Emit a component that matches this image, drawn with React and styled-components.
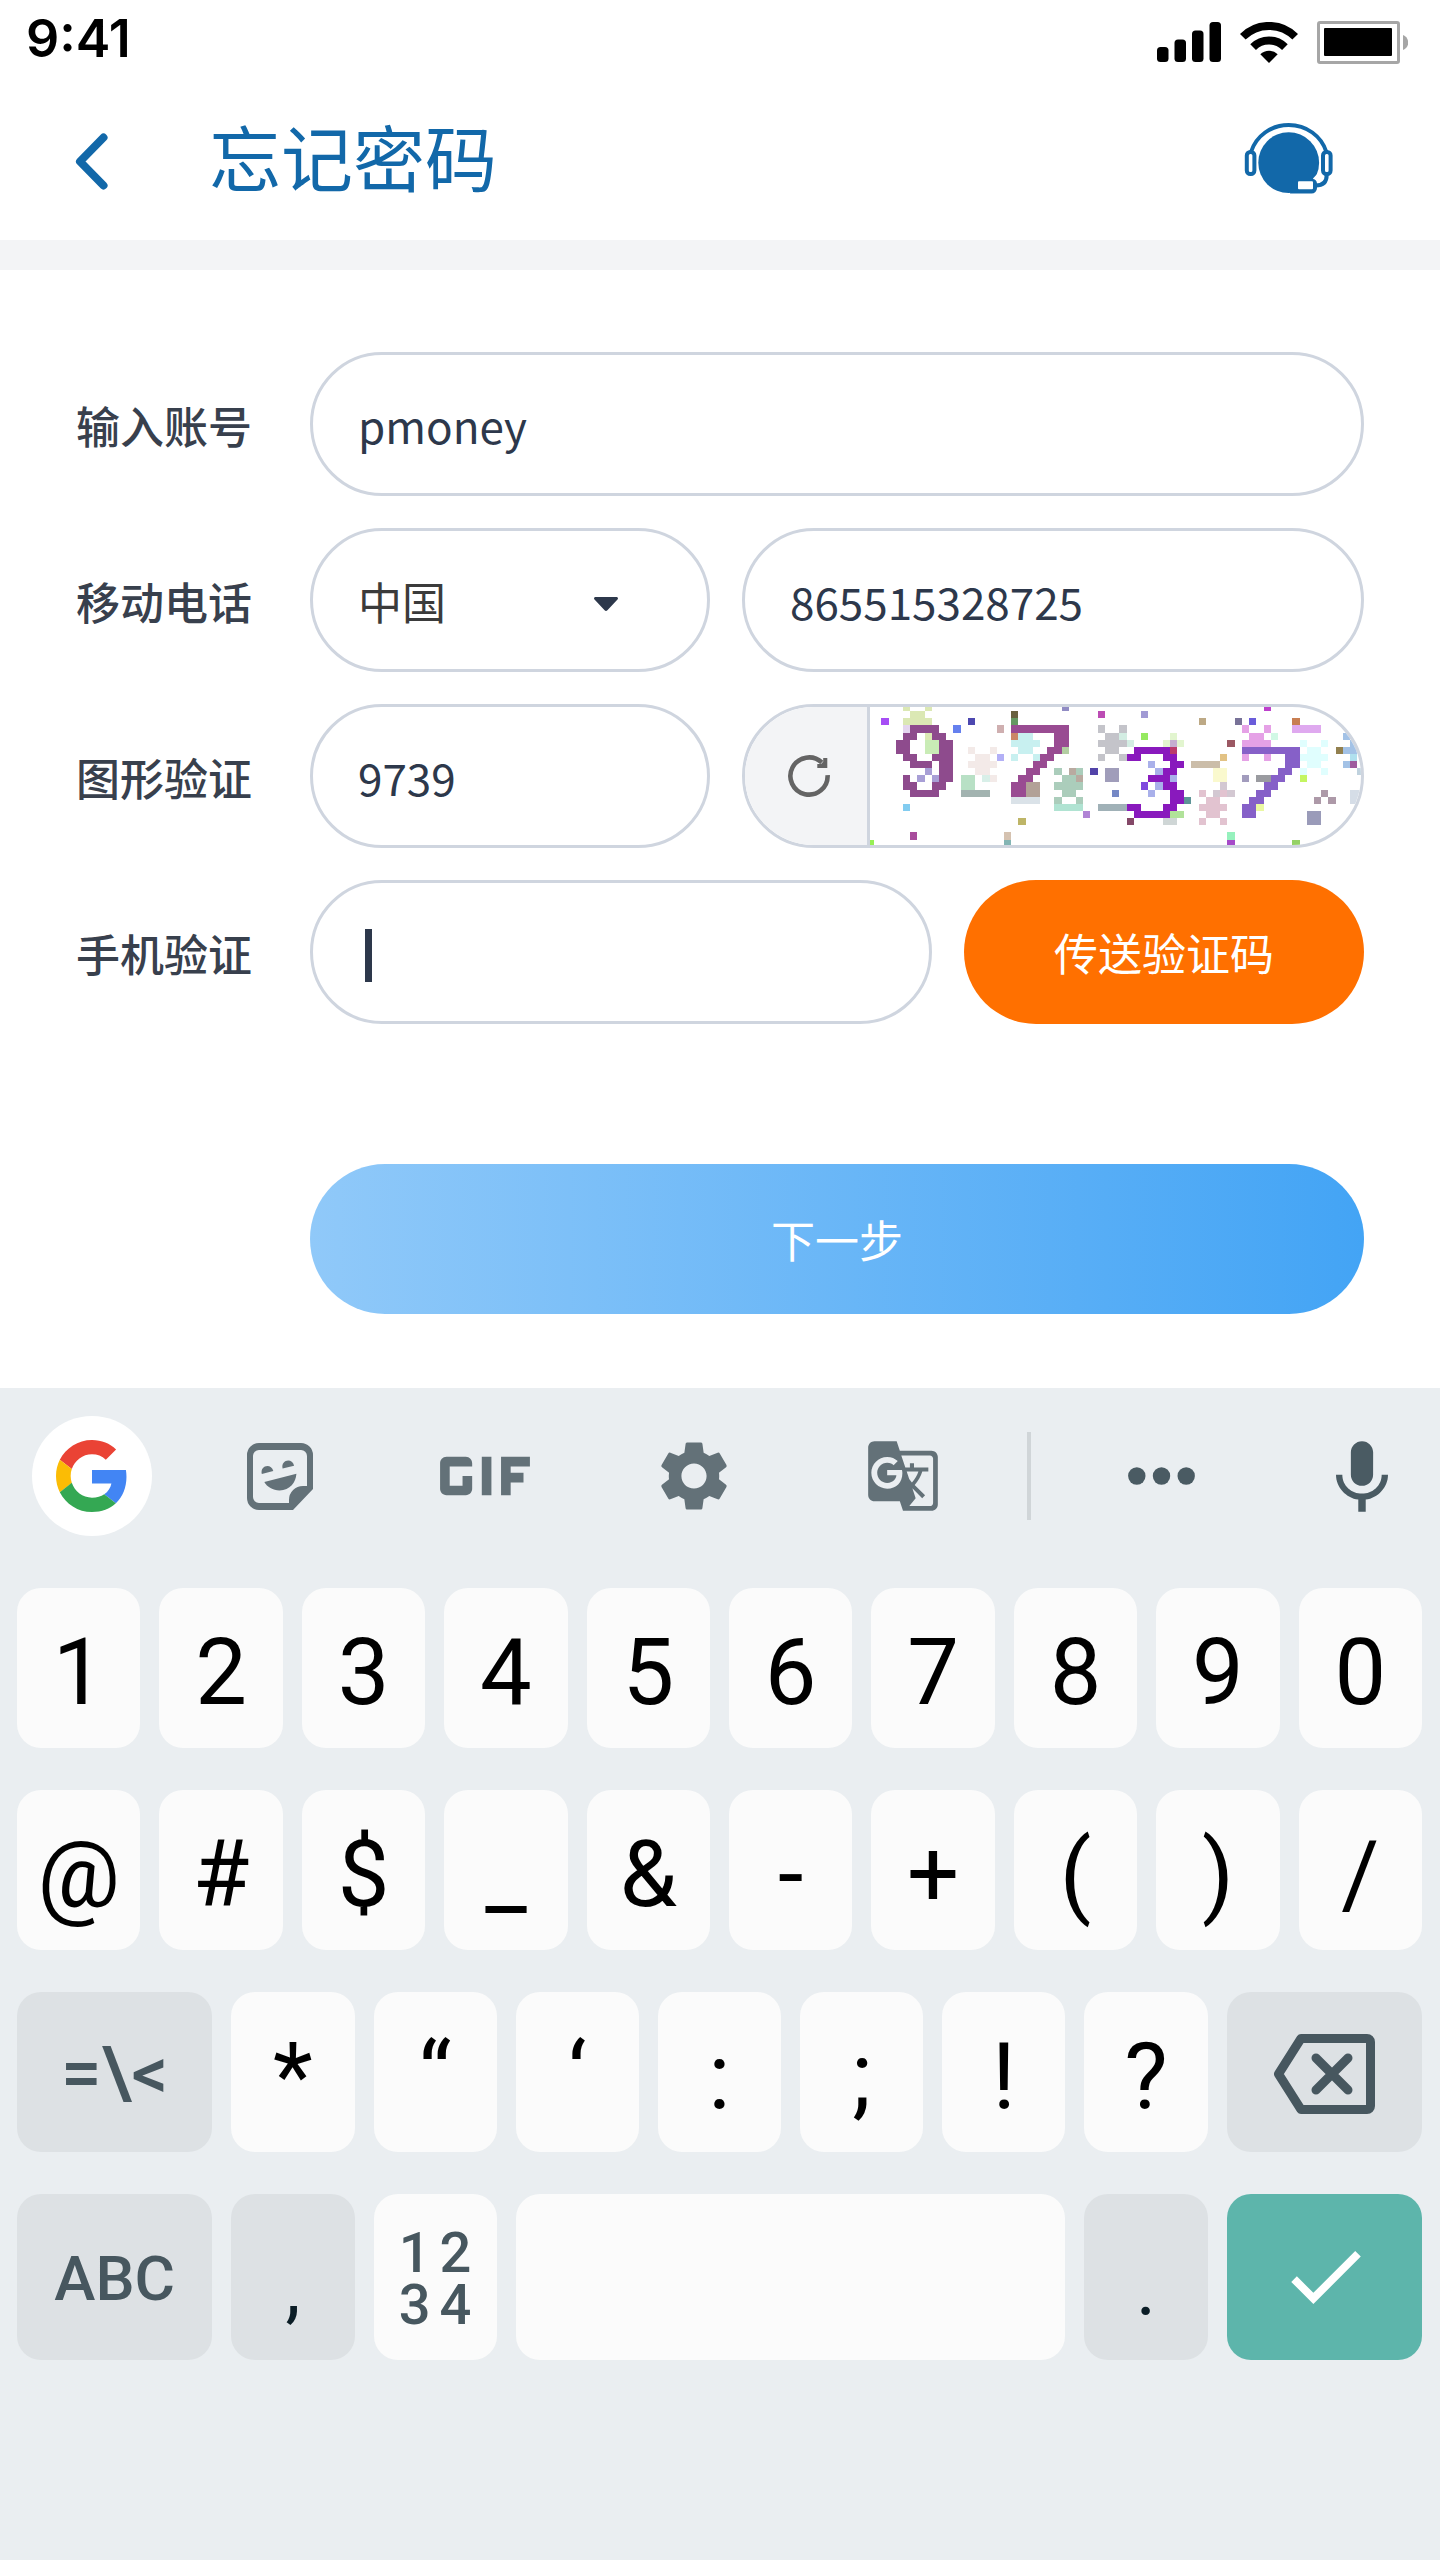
import React from "react";
import styled, { createGlobalStyle } from "styled-components";
import { MdGif, MdSettings, MdGTranslate } from "react-icons/md";

const color = {
  brand: "#1268a9",
  ink: "#2d384b",
  label: "#38404d",
  line: "#cfd5df",
  band: "#f3f4f6",
  orange: "#ff7000",
  board: "#eaeef1",
  key: "#fbfbfb",
  keyMuted: "#dde1e4",
  keyInk: "#47575f",
  tool: "#637178",
  toolDark: "#4a5b63",
  enter: "#5db5ab",
};

const GlobalStyle = createGlobalStyle`
  *, *::before, *::after { box-sizing: border-box; }
  body {
    margin: 0;
    background: #fff;
    color: ${color.ink};
    font-family: "Noto Sans CJK SC", sans-serif;
  }
  button, input, select { font: inherit; color: inherit; margin: 0; }
  button { border: 0; padding: 0; background: none; cursor: pointer; }
  svg { display: block; }
`;

const Screen = styled.div`
  display: flex;
  flex-direction: column;
  min-height: 100vh;
`;

/* ---------- status bar and header ---------- */

const StatusBar = styled.div`
  display: flex;
  align-items: center;
  justify-content: space-between;
  height: 84px;
  padding: 0 32px 0 26px;
  color: #000;
`;

const Clock = styled.time`
  padding-bottom: 6px;
  font: 600 52px/60px Inter, sans-serif;
`;

const StatusIcons = styled.div`
  display: flex;
  align-items: center;
  gap: 19px;
`;

const Header = styled.header`
  display: grid;
  grid-template-columns: 134px 1fr auto;
  align-items: center;
  height: 186px;
  padding: 0 107px 8px 75px;
  border-bottom: 30px solid ${color.band};
  color: ${color.brand};
`;

const BackButton = styled.button`
  padding-top: 6px;
`;

const Title = styled.h1`
  margin: 0;
  padding-bottom: 6px;
  font-size: 72px;
  line-height: 104px;
  font-weight: 400;
`;

/* ---------- form ---------- */

const Form = styled.form`
  display: flex;
  flex-direction: column;
  gap: 32px;
  padding: 82px 76px 74px;
  font-size: 44px;
  line-height: 64px;
`;

const Row = styled.div`
  display: grid;
  grid-template-columns: 234px 1fr;
  align-items: center;
`;

const Label = styled.label`
  padding-top: 2px;
  color: ${color.label};
  font-weight: 500;
`;

const Controls = styled.div`
  display: grid;
  grid-template-columns: ${(p) => p.$columns || "1fr"};
  gap: 32px;
`;

const Field = styled.div`
  position: relative;
  display: flex;
  height: 144px;
  border: 3px solid ${color.line};
  border-radius: 72px;
  overflow: hidden;
`;

const Input = styled.input`
  flex: 1;
  min-width: 0;
  padding: 2px 45px 0;
  border: 0;
  outline: 0;
  background: transparent;
  caret-color: transparent;
`;

const Select = styled.select`
  flex: 1;
  padding: 2px 45px 0;
  border: 0;
  outline: 0;
  appearance: none;
  background: transparent;
  color: #3b3b3b;
`;

const SelectArrow = styled.svg`
  position: absolute;
  top: 66px;
  right: 89px;
  pointer-events: none;
`;

const TextCursor = styled.span`
  position: absolute;
  top: 46px;
  left: 52px;
  width: 7px;
  height: 53px;
  background: ${color.ink};
`;

const RefreshButton = styled.button`
  display: flex;
  align-items: center;
  justify-content: center;
  width: 125px;
  padding-left: 6px;
  border-right: 3px solid ${color.line};
  background: ${color.band};
`;

const CaptchaImage = styled.svg`
  flex: 1;
  min-width: 0;
  height: 100%;
`;

const SendButton = styled.button`
  height: 144px;
  border-radius: 72px;
  background: ${color.orange};
  color: #fff;
`;

const NextButton = styled.button`
  height: 150px;
  margin: 108px 0 0 234px;
  border-radius: 75px;
  background: linear-gradient(90deg, #90c9f9, #43a4f5);
  color: #fff;
`;

/* ---------- keyboard ---------- */

const Keyboard = styled.section`
  flex: 1;
  padding-bottom: 200px;
  background: ${color.board};
`;

const Toolbar = styled.div`
  display: grid;
  grid-template-columns: 184fr 192fr 218fr 200fr 218fr 34fr 230fr 112fr;
  align-items: center;
  justify-items: center;
  height: 176px;
  margin-bottom: 24px;
  padding-right: 52px;

  > :last-child { justify-self: end; }
`;

const Tool = styled.button`
  color: ${(p) => (p.$dark ? color.toolDark : color.tool)};
`;

const GoogleTool = styled.button`
  display: flex;
  align-items: center;
  justify-content: center;
  width: 120px;
  height: 120px;
  border-radius: 50%;
  background: #fff;
`;

const ToolDivider = styled.span`
  width: 4px;
  height: 88px;
  background: #d0d5d8;
`;

const Keys = styled.div`
  display: flex;
  flex-direction: column;
  gap: 42px;
  padding: 0 18px 0 17px;
`;

const KeyRow = styled.div`
  display: grid;
  grid-template-columns: ${(p) => (p.$wideEnds ? "195fr repeat(7, 123fr) 195fr" : "repeat(10, 1fr)")};
  grid-auto-rows: ${(p) => (p.$tall ? 166 : 160)}px;
  gap: 19px;
`;

const Key = styled.button`
  display: flex;
  align-items: center;
  justify-content: center;
  min-width: 0;
  padding-top: 10px;
  border-radius: 24px;
  background: ${color.key};
  color: #000;
  font: 400 92px/108px Roboto, sans-serif;
`;

const ModeKey = styled(Key)`
  padding-top: 4px;
  background: ${color.keyMuted};
  color: ${color.keyInk};
  font-size: ${(p) => (p.$symbols ? 72 : 62)}px;
  font-weight: 500;
`;

const PunctuationKey = styled(Key)`
  padding-top: 22px;
  background: ${color.keyMuted};
  color: #0b1d26;
  font-size: 76px;
`;

const NumpadKey = styled(Key)`
  display: grid;
  grid-template-columns: auto auto;
  align-content: center;
  column-gap: 9px;
  padding-top: 4px;
  color: ${color.keyInk};
  font-size: 56px;
  line-height: 52px;
  font-weight: 500;
`;

const SpaceKey = styled(Key)`
  grid-column: span 4;
`;

const EnterKey = styled(Key)`
  padding: 0 0 0 4px;
  background: ${color.enter};
  color: #fff;
`;

/* ---------- icons ---------- */

const SignalIcon = () => (
  <svg width="64" height="40" viewBox="0 0 64 40" aria-hidden="true">
    <rect x="0" y="25" width="11.5" height="15" rx="3.5" />
    <rect x="17.5" y="17.5" width="11.5" height="22.5" rx="3.5" />
    <rect x="35" y="8.5" width="11.5" height="31.5" rx="3.5" />
    <rect x="52.5" y="0" width="11.5" height="40" rx="3.5" />
  </svg>
);

const WifiIcon = () => (
  <svg width="58" height="41" viewBox="0 0 58 41" aria-hidden="true">
    <g fill="none" stroke="#000" strokeWidth="8">
      <path d="M2.8 14.8a37 37 0 0 1 52.4 0" />
      <path d="M13.1 25.1a22.5 22.5 0 0 1 31.8 0" />
    </g>
    <path d="M29 41 20.3 32.3a12.3 12.3 0 0 1 17.4 0z" />
  </svg>
);

const BatteryIcon = () => (
  <svg width="91" height="43" viewBox="0 0 91 43" aria-hidden="true">
    <rect x="1.5" y="1.5" width="80" height="40" rx="1.5" fill="none" stroke="#a6a6a6" strokeWidth="3" />
    <rect x="7" y="7" width="68" height="28" rx="1" />
    <path d="M86 14c7 3 7 12 0 15z" fill="#a6a6a6" />
  </svg>
);

const BackIcon = () => (
  <svg width="33" height="57" viewBox="0 0 33 57" aria-hidden="true">
    <path d="M28.5 4.5 5 28.5l23.5 24" fill="none" stroke="currentColor" strokeWidth="8" strokeLinecap="round" strokeLinejoin="round" />
  </svg>
);

const HeadsetIcon = () => (
  <svg width="89" height="72" viewBox="0 0 89 72" aria-hidden="true">
    <circle cx="44.7" cy="40.7" r="30.4" fill="currentColor" />
    <path d="M69 56.5 75 50v12l-3 1z" fill="#fff" />
    <g fill="none" stroke="currentColor" strokeWidth="4">
      <path d="M7 30C12 14 27 3 44.7 3S77.4 14 82.4 30" />
      <rect x="2.8" y="30" width="7.6" height="22" rx="3.5" fill="#fff" />
      <rect x="79" y="30" width="7.6" height="22" rx="3.5" fill="#fff" />
      <path d="M82.7 53c0 7-4 10.5-11 10.5" />
    </g>
    <path d="M49 57h19.5a4.5 4.5 0 0 1 4.5 4.5V66a5.5 5.5 0 0 1-5.5 5.5H46z" fill="currentColor" />
    <rect x="54" y="59.3" width="15" height="8" rx="1" fill="#fff" />
  </svg>
);

const RefreshIcon = () => (
  <svg width="44" height="44" viewBox="0 0 44 44" aria-hidden="true">
    <path d="M40.6 21.2A18.6 18.6 0 1 1 34.8 8.5" fill="none" stroke="#646464" strokeWidth="4.6" />
    <path d="M40.3 4v10H30.3V10H34l2.200-2.200V4z" fill="#646464" />
  </svg>
);

const GoogleIcon = () => (
  <svg width="72" height="72" viewBox="0 0 48 48" aria-hidden="true">
    <path fill="#ea4335" d="M24 9.5c3.54 0 6.71 1.22 9.21 3.6l6.85-6.85C35.9 2.38 30.47 0 24 0 14.62 0 6.51 5.38 2.56 13.22l7.98 6.19C12.43 13.72 17.74 9.5 24 9.5z" />
    <path fill="#4285f4" d="M46.98 24.55c0-1.57-.15-3.09-.38-4.55H24v9.02h12.94c-.58 2.96-2.26 5.48-4.78 7.18l7.73 6c4.51-4.18 7.09-10.36 7.09-17.65z" />
    <path fill="#fbbc05" d="M10.53 28.59c-.48-1.45-.76-2.99-.76-4.59s.27-3.14.76-4.59l-7.98-6.19C.92 16.46 0 20.12 0 24c0 3.88.92 7.54 2.56 10.78l7.97-6.19z" />
    <path fill="#34a853" d="M24 48c6.48 0 11.93-2.13 15.89-5.81l-7.73-6c-2.15 1.45-4.92 2.3-8.16 2.3-6.26 0-11.57-4.22-13.47-9.91l-7.98 6.19C6.51 42.62 14.62 48 24 48z" />
  </svg>
);

const StickerIcon = () => (
  <svg width="66" height="67" viewBox="0 0 66 67" fill="currentColor" aria-hidden="true">
    <path
      fillRule="evenodd"
      d="M12 0h42a12 12 0 0 1 12 12v34L46 67H12A12 12 0 0 1 0 55V12A12 12 0 0 1 12 0zM12 7a6 6 0 0 0-6 6v41a6 6 0 0 0 6 6h30v-3a14 14 0 0 1 14-14h4V13a6 6 0 0 0-6-6z"
    />
    <path d="M14.8 31c-2.200-8.400 9.300-11.700 11.500-2.900z" />
    <path d="M35.6 25.6c-2.200-8.400 9.300-11.700 11.500-2.900z" />
    <path d="M17.3 39 49.4 30.7C49 39 43 47.4 32.5 47.4 26 47.4 20 44 17.3 39z" />
  </svg>
);

const DotsIcon = () => (
  <svg width="67" height="18" viewBox="0 0 67 18" fill="currentColor" aria-hidden="true">
    <circle cx="8.8" cy="9" r="8.7" />
    <circle cx="33.5" cy="9" r="8.7" />
    <circle cx="58.2" cy="9" r="8.7" />
  </svg>
);

const MicIcon = () => (
  <svg width="52" height="71" viewBox="5 2 14 19" fill="currentColor" aria-hidden="true">
    <path d="M12 14c1.66 0 2.99-1.34 2.99-3L15 5c0-1.66-1.34-3-3-3S9 3.34 9 5v6c0 1.66 1.34 3 3 3zm5.3-3c0 3-2.54 5.1-5.3 5.1S6.7 14 6.7 11H5c0 3.41 2.72 6.23 6 6.72V21h2v-3.28c3.28-.48 6-3.3 6-6.72h-1.7z" />
  </svg>
);

const BackspaceIcon = () => (
  <svg width="102" height="80" viewBox="0 0 102 80" fill="none" stroke="currentColor" strokeWidth="9" aria-hidden="true">
    <path d="M28 4.5h66a3.5 3.5 0 0 1 3.5 3.5v64a3.5 3.5 0 0 1-3.5 3.5H28L5.5 40z" strokeLinejoin="round" />
    <path d="m43 24 32 32M75 24 43 56" strokeLinecap="round" />
  </svg>
);

const CheckIcon = () => (
  <svg width="70" height="53" viewBox="3.4 5.59 17.6 13.41" fill="currentColor" aria-hidden="true">
    <path d="M9 16.17 4.83 12l-1.42 1.41L9 19 21 7l-1.41-1.41z" />
  </svg>
);

/* Captcha bitmap: each colour is followed by its blocks as [column, row, width, height]. */
const captcha = [
  ["#dbe8b4", [5, 0, 1, 1], [8, 0, 1, 1], [6, 1, 2, 1], [5, 2, 4, 1], [8, 4, 1, 1]],
  ["#e4d5ef", [5, 3, 1, 1]],
  ["#a64df5", [2, 2, 1, 1]],
  ["#c9ecb6", [8, 5, 2, 2]],
  ["#a89fd6", [8, 9, 1, 1], [7, 10, 1, 1], [9, 10, 1, 1]],
  ["#8e4b8d", [6, 3, 4, 1], [5, 4, 2, 1], [9, 4, 2, 1], [4, 5, 2, 2], [10, 5, 2, 6], [5, 7, 2, 1], [9, 7, 1, 1], [6, 8, 3, 1], [5, 10, 1, 1], [5, 11, 2, 1], [9, 11, 2, 1], [6, 12, 4, 1]],
  ["#6580ee", [12, 3, 1, 1]],
  ["#4d48b0", [14, 2, 1, 1]],
  ["#cfafb0", [18, 3, 1, 1]],
  ["#69603f", [20, 1, 1, 1]],
  ["#659862", [20, 2, 1, 1]],
  ["#cb8767", [20, 4, 1, 1]],
  ["#b3b0f6", [18, 7, 1, 1]],
  ["#f3eae8", [14, 6, 1, 1], [17, 6, 1, 1], [15, 7, 2, 1], [14, 8, 4, 1], [15, 9, 2, 1], [17, 10, 1, 1]],
  ["#d8efe8", [16, 10, 1, 1]],
  ["#b8e0c5", [13, 10, 2, 2]],
  ["#a2b3b0", [13, 12, 4, 1]],
  ["#c8f0f0", [21, 4, 2, 1], [20, 5, 4, 1], [21, 6, 2, 1], [20, 7, 1, 1], [23, 7, 1, 1]],
  ["#994b92", [20, 3, 8, 1], [26, 4, 2, 2], [25, 6, 2, 1], [24, 7, 2, 1], [23, 8, 2, 1], [22, 9, 2, 1], [21, 10, 2, 1], [20, 11, 2, 2]],
  ["#b3cea2", [27, 6, 1, 1]],
  ["#b2a197", [22, 11, 2, 2]],
  ["#dae2e8", [20, 13, 4, 1]],
  ["#82ccf0", [5, 14, 1, 1]],
  ["#beb567", [21, 16, 1, 1]],
  ["#a84c9c", [6, 18, 1, 1]],
  ["#d5c2b0", [19, 18, 1, 1]],
  ["#83b5b4", [19, 19, 1, 1]],
  ["#97ef55", [0, 19, 1, 1]],
  ["#abcdbb", [26, 9, 1, 1], [29, 9, 1, 1], [27, 10, 2, 1], [26, 11, 4, 1], [27, 12, 2, 1], [26, 13, 1, 1], [29, 13, 1, 1]],
  ["#b9aaa0", [28, 9, 1, 1], [29, 10, 1, 1]],
  ["#b0e3d2", [26, 14, 4, 1]],
  ["#918cc4", [27, 0, 1, 1]],
  ["#bc4cb4", [32, 1, 1, 1]],
  ["#a19ad4", [38, 1, 1, 1]],
  ["#95e960", [38, 4, 1, 1]],
  ["#c4c4ca", [32, 3, 1, 1], [35, 3, 1, 1], [33, 4, 2, 1], [32, 5, 4, 1], [33, 6, 2, 1], [32, 7, 1, 1], [35, 7, 1, 1]],
  ["#d3ede3", [35, 4, 1, 1], [36, 5, 1, 1]],
  ["#e2f5cf", [42, 4, 1, 1], [41, 5, 1, 1], [43, 5, 1, 1]],
  ["#c5aed0", [42, 5, 1, 1]],
  ["#bb3c6b", [42, 6, 1, 1]],
  ["#8919bd", [37, 6, 5, 1], [36, 7, 2, 1], [41, 7, 2, 1], [42, 8, 2, 1], [41, 9, 2, 1], [39, 10, 3, 1], [41, 11, 2, 1], [42, 12, 2, 2], [36, 14, 2, 1], [41, 14, 2, 1], [37, 15, 5, 1]],
  ["#a9b0ea", [39, 8, 1, 1], [40, 9, 1, 1], [42, 10, 1, 1], [40, 11, 1, 1], [39, 12, 1, 1]],
  ["#8048de", [38, 11, 1, 1]],
  ["#5d9497", [44, 13, 1, 1]],
  ["#b1e29a", [42, 15, 2, 1]],
  ["#cfd6d6", [41, 16, 2, 1]],
  ["#a0b1b7", [32, 14, 4, 1]],
  ["#5243a9", [31, 9, 1, 1]],
  ["#a09dba", [33, 9, 2, 2]],
  ["#7588c5", [34, 12, 1, 1]],
  ["#b084d5", [30, 15, 1, 1]],
  ["#844868", [36, 16, 1, 1]],
  ["#bda985", [46, 2, 1, 1]],
  ["#787298", [51, 2, 1, 1]],
  ["#6a5cda", [53, 2, 1, 1]],
  ["#bd40cc", [55, 0, 1, 1]],
  ["#9b5863", [50, 5, 1, 1]],
  ["#cbbda9", [45, 8, 4, 1]],
  ["#e2c284", [49, 7, 1, 1]],
  ["#faf9ce", [48, 9, 2, 2]],
  ["#d3c8d2", [49, 11, 1, 1], [48, 12, 1, 1], [50, 12, 1, 1]],
  ["#e2c3d0", [46, 12, 1, 1], [49, 12, 1, 1], [47, 13, 2, 1], [46, 14, 4, 1], [47, 15, 2, 1], [46, 16, 1, 1], [49, 16, 1, 1]],
  ["#96f1bd", [50, 18, 1, 1]],
  ["#a64ac9", [50, 19, 1, 1]],
  ["#e5a1e6", [52, 3, 1, 1], [55, 3, 1, 1], [53, 4, 2, 1], [52, 5, 4, 1], [52, 7, 1, 1], [55, 7, 1, 1]],
  ["#d1f8e5", [56, 4, 1, 1]],
  ["#8660c8", [52, 6, 8, 1], [58, 7, 2, 2], [57, 9, 2, 1], [56, 10, 2, 1], [55, 11, 2, 1], [54, 12, 2, 1], [53, 13, 2, 1], [52, 14, 2, 2]],
  ["#a29cbd", [52, 10, 1, 1]],
  ["#9a9ba0", [54, 10, 2, 1]],
  ["#eaf8a2", [54, 14, 1, 1]],
  ["#c87e52", [59, 2, 1, 1]],
  ["#dfa9ef", [59, 3, 4, 1]],
  ["#e0fefe", [60, 5, 1, 1], [63, 5, 1, 1], [61, 6, 2, 1], [60, 7, 4, 1], [61, 8, 2, 1], [60, 9, 1, 1], [63, 9, 1, 1]],
  ["#c4f561", [60, 10, 1, 1]],
  ["#92804f", [65, 6, 1, 1]],
  ["#a3c2e6", [66, 4, 1, 1], [67, 5, 1, 1], [66, 6, 3, 1], [66, 8, 1, 1]],
  ["#b0e0ee", [67, 7, 1, 1]],
  ["#9f5c9f", [67, 8, 1, 1]],
  ["#c0d2de", [68, 9, 1, 1]],
  ["#ad99a8", [63, 12, 1, 1], [62, 13, 1, 1], [64, 13, 1, 1]],
  ["#9a9bb9", [61, 15, 2, 2]],
  ["#d5dde7", [67, 12, 2, 2]],
  ["#95d265", [59, 19, 1, 1]],
];

const Captcha = () => (
  <CaptchaImage viewBox="0.42 0.42 68.1 19.35" preserveAspectRatio="none" shapeRendering="crispEdges" role="img" aria-label="图形验证码">
    {captcha.map(([fill, ...blocks]) => (
      <path key={fill} fill={fill} d={blocks.map(([x, y, w, h]) => `M${x} ${y}h${w}v${h}h${-w}z`).join("")} />
    ))}
  </CaptchaImage>
);

const digits = ["1", "2", "3", "4", "5", "6", "7", "8", "9", "0"];
const symbols = ["@", "#", "$", "_", "&", "-", "+", "(", ")", "/"];
const marks = ["*", "“", "‘", ":", ";", "!", "?"];

const renderKeys = (list) =>
  list.map((char) => (
    <Key type="button" key={char}>
      {char}
    </Key>
  ));

export default function App() {
  return (
    <>
      <GlobalStyle />
      <Screen>
        <StatusBar>
          <Clock>9:41</Clock>
          <StatusIcons>
            <SignalIcon />
            <WifiIcon />
            <BatteryIcon />
          </StatusIcons>
        </StatusBar>
        <Header>
          <BackButton type="button" aria-label="返回">
            <BackIcon />
          </BackButton>
          <Title>忘记密码</Title>
          <button type="button" aria-label="客服">
            <HeadsetIcon />
          </button>
        </Header>

        <Form onSubmit={(e) => e.preventDefault()}>
          <Row>
            <Label htmlFor="account">输入账号</Label>
            <Field>
              <Input id="account" type="text" defaultValue="pmoney" />
            </Field>
          </Row>
          <Row>
            <Label htmlFor="phone">移动电话</Label>
            <Controls $columns="400px 1fr">
              <Field>
                <Select aria-label="国家" defaultValue="cn">
                  <option value="cn">中国</option>
                </Select>
                <SelectArrow width="24" height="14" viewBox="0 0 24 14" aria-hidden="true">
                  <path d="M1.5 0h21c1.3 0 2 1.5 1 2.5L13.4 13.3c-.8.9-2 .9-2.800 0L.5 2.500C-.5 1.500.2 0 1.500 0z" fill={color.ink} />
                </SelectArrow>
              </Field>
              <Field>
                <Input id="phone" type="tel" defaultValue="865515328725" />
              </Field>
            </Controls>
          </Row>
          <Row>
            <Label htmlFor="captcha">图形验证</Label>
            <Controls $columns="400px 1fr">
              <Field>
                <Input id="captcha" type="text" defaultValue="9739" />
              </Field>
              <Field>
                <RefreshButton type="button" aria-label="刷新">
                  <RefreshIcon />
                </RefreshButton>
                <Captcha />
              </Field>
            </Controls>
          </Row>
          <Row>
            <Label htmlFor="code">手机验证</Label>
            <Controls $columns="1fr 400px">
              <Field>
                <Input id="code" type="text" />
                <TextCursor />
              </Field>
              <SendButton type="button">传送验证码</SendButton>
            </Controls>
          </Row>
          <NextButton type="submit">下一步</NextButton>
        </Form>

        <Keyboard aria-label="键盘">
          <Toolbar>
            <GoogleTool type="button" aria-label="Google">
              <GoogleIcon />
            </GoogleTool>
            <Tool type="button" aria-label="Sticker">
              <StickerIcon />
            </Tool>
            <Tool type="button" aria-label="GIF">
              <MdGif size={154} />
            </Tool>
            <Tool type="button" aria-label="Settings">
              <MdSettings size={84} />
            </Tool>
            <Tool type="button" aria-label="Translate">
              <MdGTranslate size={76} />
            </Tool>
            <ToolDivider />
            <Tool type="button" aria-label="More" $dark>
              <DotsIcon />
            </Tool>
            <Tool type="button" aria-label="Voice" $dark>
              <MicIcon />
            </Tool>
          </Toolbar>
          <Keys>
            <KeyRow>{renderKeys(digits)}</KeyRow>
            <KeyRow>{renderKeys(symbols)}</KeyRow>
            <KeyRow $wideEnds>
              <ModeKey type="button" $symbols>
                =\&lt;
              </ModeKey>
              {renderKeys(marks)}
              <ModeKey type="button" aria-label="Backspace">
                <BackspaceIcon />
              </ModeKey>
            </KeyRow>
            <KeyRow $wideEnds $tall>
              <ModeKey type="button">ABC</ModeKey>
              <PunctuationKey type="button">,</PunctuationKey>
              <NumpadKey type="button">
                <span>1</span>
                <span>2</span>
                <span>3</span>
                <span>4</span>
              </NumpadKey>
              <SpaceKey type="button" aria-label="Space" />
              <PunctuationKey type="button">.</PunctuationKey>
              <EnterKey type="button" aria-label="Enter">
                <CheckIcon />
              </EnterKey>
            </KeyRow>
          </Keys>
        </Keyboard>
      </Screen>
    </>
  );
}
